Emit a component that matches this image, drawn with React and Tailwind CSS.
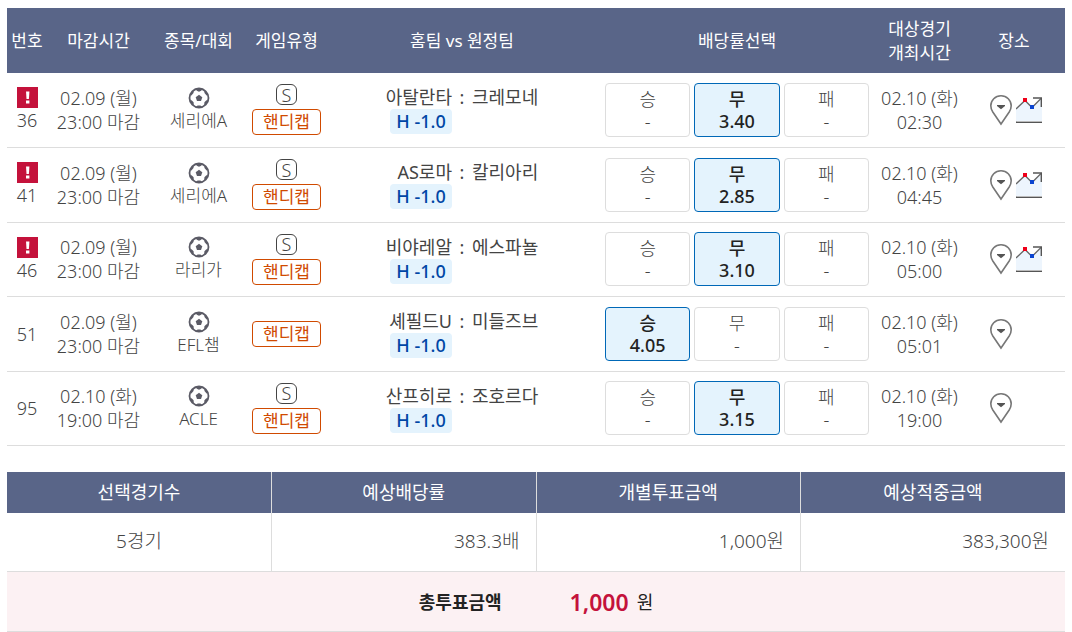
import React from 'react';

const matches = [
  { no: 36, alert: true, close: ['02.09 (월)', '23:00 마감'], league: '세리에A', single: true, home: '아탈란타', away: '크레모네', odds: ['-', '3.40', '-'], picked: 1, start: ['02.10 (화)', '02:30'], chart: true },
  { no: 41, alert: true, close: ['02.09 (월)', '23:00 마감'], league: '세리에A', single: true, home: 'AS로마', away: '칼리아리', odds: ['-', '2.85', '-'], picked: 1, start: ['02.10 (화)', '04:45'], chart: true },
  { no: 46, alert: true, close: ['02.09 (월)', '23:00 마감'], league: '라리가', single: true, home: '비야레알', away: '에스파뇰', odds: ['-', '3.10', '-'], picked: 1, start: ['02.10 (화)', '05:00'], chart: true },
  { no: 51, alert: false, close: ['02.09 (월)', '23:00 마감'], league: 'EFL챔', single: false, home: '셰필드U', away: '미들즈브', odds: ['4.05', '-', '-'], picked: 0, start: ['02.10 (화)', '05:01'], chart: false },
  { no: 95, alert: false, close: ['02.10 (화)', '19:00 마감'], league: 'ACLE', single: true, home: '산프히로', away: '조호르다', odds: ['-', '3.15', '-'], picked: 1, start: ['02.10 (화)', '19:00'], chart: false },
];

const outcomes = ['승', '무', '패'];

const AlertIcon = () => (
  <svg width="21" height="21" viewBox="0 0 21 21" aria-hidden="true">
    <rect width="21" height="21" fill="#c4123b" />
    <path d="M9 4.5h3.4l-.5 7.5H9.5z" fill="#fff" />
    <rect x="9" y="13.5" width="3.4" height="3" fill="#fff" />
  </svg>
);

const SoccerIcon = () => (
  <svg width="22" height="22" viewBox="0 0 22 22" aria-hidden="true">
    <circle cx="11" cy="11" r="9.5" fill="#fff" stroke="#5b5b66" strokeWidth="1.8" />
    <path d="M11 7.8l3.3 2.4-1.3 3.8H9l-1.3-3.8z" fill="#5b5b66" />
    <path
      d="M7.6 2.1h6.8L13.2 3.8 11 4.7 8.8 3.8zM1.6 8.2L4 4.4l1.8-.4-.3 2.1L3.4 8.4zM20.4 8.2L18 4.4l-1.8-.4.3 2.1 2.1 2.3zM1.8 13.4l1.8-.2 2 2 .2 2.8-1.6-.2zM20.2 13.4l-1.8-.2-2 2-.2 2.8 1.6-.2zM8.4 19.8l1.1-1.2h3l1.1 1.2-2.6.7z"
      fill="#5b5b66"
    />
  </svg>
);

const PinIcon = () => (
  <svg width="24" height="32" viewBox="0 0 24 32" aria-hidden="true">
    <path
      d="M12 1.8C6.2 1.8 1.8 6.2 1.8 11.8c0 2.4.8 4.3 2 6.2L12 30l8.2-12c1.2-1.9 2-3.8 2-6.2 0-5.6-4.4-10-10.2-10z"
      fill="#fff"
      stroke="#777"
      strokeWidth="1.6"
    />
    <path d="M8 11h8v1l-4 3.2L8 12z" fill="#555" />
  </svg>
);

const ChartIcon = () => (
  <svg width="26" height="26" viewBox="0 0 26 26" aria-hidden="true">
    <path d="M0 12L9 3l7 7 10-8v22H0z" fill="#edf5fd" />
    <path d="M0 12l9-8.5 7 7L25 1.5" fill="none" stroke="#666" strokeWidth="1.3" />
    <path d="M17 1h8.3v9" fill="none" stroke="#555" strokeWidth="1.4" />
    <path d="M0 25.3h26" stroke="#555" strokeWidth="1.4" />
    <rect x="7" y="1" width="4" height="4" fill="#ee0019" />
    <rect x="14" y="8" width="4" height="4" fill="#0b45d0" />
  </svg>
);

const OddsButton = ({ label, value, active }) => (
  <button
    type="button"
    aria-pressed={active}
    className={
      active
        ? 'flex h-[54px] flex-col items-center justify-center rounded border border-[#0068b7] bg-[#e4f3fd] text-lg leading-[22px] font-medium text-[#222]'
        : 'flex h-[54px] flex-col items-center justify-center rounded border border-[#ddd] bg-white text-lg leading-[22px] font-light text-[#444]'
    }
  >
    <span>{label}</span>
    <span>{value}</span>
  </button>
);

const MatchRow = ({ match }) => (
  <tr className="h-[74px] border-b border-[#ddd] even:h-[75px]">
    <td>
      <div className="flex flex-col items-center text-lg leading-6">
        {match.alert && <AlertIcon />}
        <span>{match.no}</span>
      </div>
    </td>
    <td className="text-lg leading-6">
      <div>{match.close[0]}</div>
      <div>{match.close[1]}</div>
    </td>
    <td>
      <div className="flex flex-col items-center">
        <SoccerIcon />
        <span>{match.league}</span>
      </div>
    </td>
    <td>
      <div className="flex flex-col items-center gap-1">
        {match.single && (
          <span className="flex h-[21px] w-[21px] items-center justify-center rounded-md border border-[#444] text-lg">S</span>
        )}
        <span className="flex h-[26px] w-[69px] items-center justify-center rounded border border-[#d04a00] font-normal text-[#d04a00]">
          핸디캡
        </span>
      </div>
    </td>
    <td>
      <div className="grid grid-cols-[1fr_auto_1fr] gap-x-1 text-lg leading-6 font-normal">
        <div className="text-right">{match.home}</div>
        <div className="w-3">:</div>
        <div className="text-left">{match.away}</div>
        <div className="flex justify-end">
          <span className="h-[25px] w-[62px] rounded bg-[#e4f3fd] text-center font-medium text-[#0046a5]">H -1.0</span>
        </div>
      </div>
    </td>
    <td className="px-[7px]">
      <div className="grid grid-cols-3 gap-1">
        {outcomes.map((label, i) => (
          <OddsButton key={label} label={label} value={match.odds[i]} active={match.picked === i} />
        ))}
      </div>
    </td>
    <td className="text-lg leading-6 whitespace-nowrap">
      <div>{match.start[0]}</div>
      <div>{match.start[1]}</div>
    </td>
    <td className="pl-[26px]">
      <div className="flex items-center gap-[3px]">
        <button type="button" aria-label="장소">
          <PinIcon />
        </button>
        {match.chart && (
          <button type="button" aria-label="배당률 변동">
            <ChartIcon />
          </button>
        )}
      </div>
    </td>
  </tr>
);

const App = () => {
  return (
    <main className="bg-white px-[7px] pt-2 font-['Noto_Sans','Noto_Sans_CJK_KR',sans-serif] text-[#444]">
      <table className="w-full table-fixed border-collapse text-center text-[17px] leading-6 font-light">
        <colgroup>
          <col className="w-10" />
          <col className="w-[103px]" />
          <col className="w-[97px]" />
          <col className="w-[79px]" />
          <col />
          <col className="w-[278px]" />
          <col className="w-[87px]" />
          <col className="w-[102px]" />
        </colgroup>
        <thead className="bg-[#596588] text-white">
          <tr className="h-[65px]">
            <th className="font-normal">번호</th>
            <th className="font-normal">마감시간</th>
            <th className="font-normal">종목/대회</th>
            <th className="font-normal">게임유형</th>
            <th className="font-normal">홈팀 vs 원정팀</th>
            <th className="font-normal">배당률선택</th>
            <th className="font-normal">대상경기<br />개최시간</th>
            <th className="font-normal">장소</th>
          </tr>
        </thead>
        <tbody>
          {matches.map((match) => (
            <MatchRow key={match.no} match={match} />
          ))}
        </tbody>
      </table>

      {/* Bet summary */}
      <table className="mt-[26px] w-full table-fixed border-collapse text-lg font-light">
        <thead className="bg-[#596588] text-white">
          <tr className="h-[41px] divide-x divide-[#ddd]">
            <th className="font-normal">선택경기수</th>
            <th className="font-normal">예상배당률</th>
            <th className="font-normal">개별투표금액</th>
            <th className="font-normal">예상적중금액</th>
          </tr>
        </thead>
        <tbody>
          <tr className="h-[59px] divide-x divide-[#ddd] border-b border-[#ddd] text-right text-[19px]">
            <td className="text-center">5경기</td>
            <td className="pr-4">383.3배</td>
            <td className="pr-4">1,000원</td>
            <td className="pr-4">383,300원</td>
          </tr>
          <tr className="h-[60px] border-b border-[#ddd] bg-[#fcf1f3] text-[#222]">
            <td colSpan={4}>
              <div className="flex items-center justify-center leading-6">
                <strong className="mr-[68px] font-bold">총투표금액</strong>
                <strong className="mr-2 text-[23px] font-semibold text-[#c4123b]">1,000</strong>
                <span className="font-normal">원</span>
              </div>
            </td>
          </tr>
        </tbody>
      </table>
    </main>
  );
};

export default App;
